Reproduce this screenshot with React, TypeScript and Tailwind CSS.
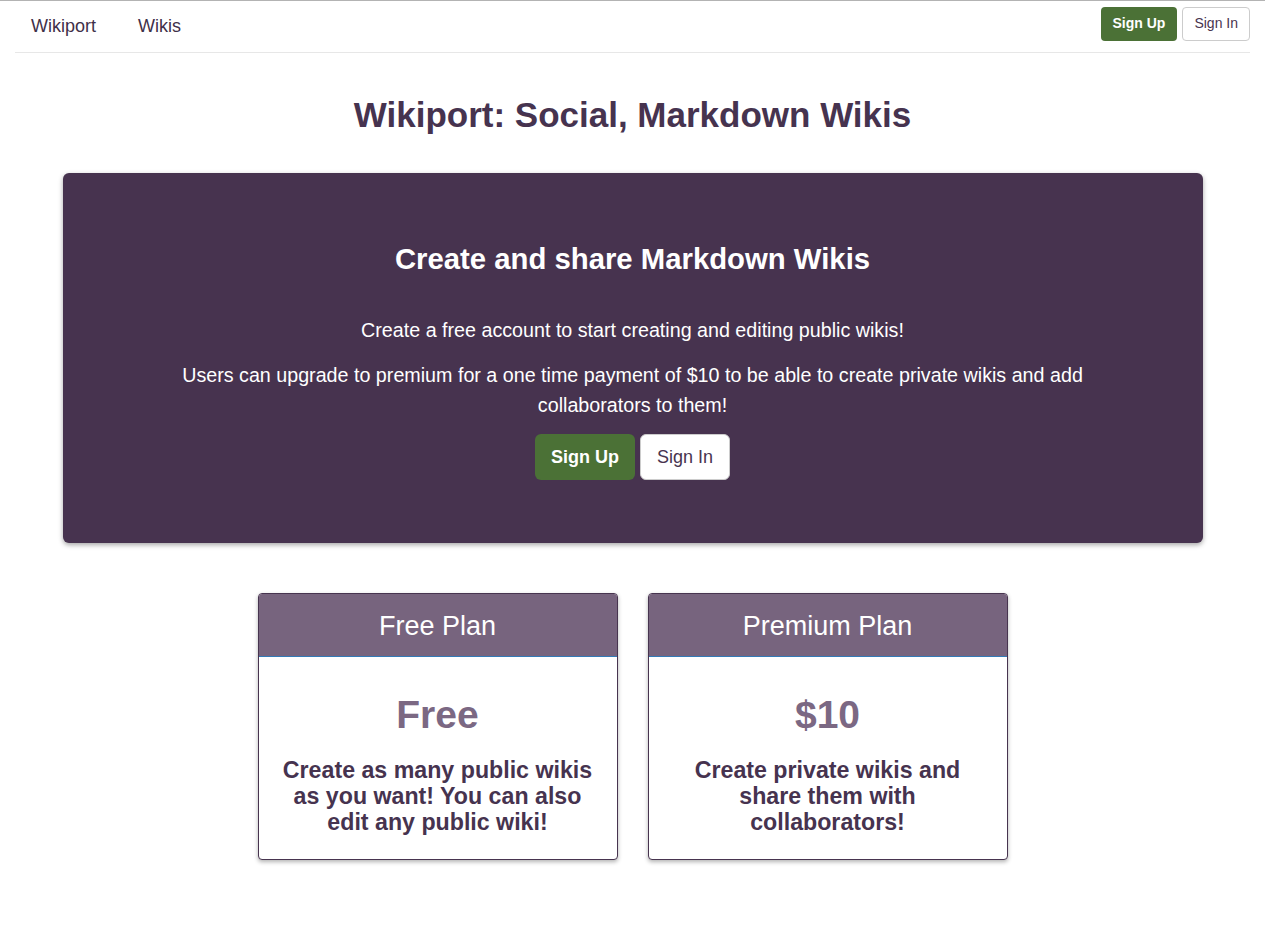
import React from "react";

// Pricing plans shown under the hero
const plans = [
    {
        name: "Free Plan",
        price: "Free",
        text: "Create as many public wikis as you want! You can also edit any public wiki!",
    },
    {
        name: "Premium Plan",
        price: "$10",
        text: "Create private wikis and share them with collaborators!",
    },
];

const App = () => {
    return (
        <div className="min-h-[927px] bg-white border-t border-[#b3b3b3] font-['Liberation_Sans',Arial,sans-serif] text-[#47344f]">
            {/* Navbar */}
            <div className="px-[15px]">
                <nav className="h-[52px] flex items-center justify-between border-b border-[#e7e7e7]">
                    <div className="flex items-center text-[18px] text-[#3f3049]">
                        <a className="pl-[16px] pr-[42px]">Wikiport</a>
                        <a>Wikis</a>
                    </div>
                    <div className="flex items-center gap-[5px] mb-[6px]">
                        <button className="h-[34px] px-[12px] rounded-[4px] bg-[#4b7136] text-white text-[14px] font-bold">
                            Sign Up
                        </button>
                        <button className="h-[34px] px-[11px] rounded-[4px] bg-white border border-[#cccccc] text-[14px] text-[#47344f]">
                            Sign In
                        </button>
                    </div>
                </nav>
            </div>

            <div className="w-[1140px] mx-auto">
                {/* Page title */}
                <h1 className="mt-[42px] text-center text-[35px] font-bold leading-[40px] text-[#46334f]">
                    Wikiport: Social, Markdown Wikis
                </h1>

                {/* Hero */}
                <section className="mt-[38px] bg-[#47334f] rounded-[6px] shadow-[0_2px_5px_rgba(0,0,0,0.35)] pt-[69px] pb-[63px] text-center text-white">
                    <h2 className="text-[29.3px] font-bold leading-[33px]">Create and share Markdown Wikis</h2>
                    <p className="mt-[40px] text-[19.7px] leading-[30px]">
                        Create a free account to start creating and editing public wikis!
                    </p>
                    <p className="mt-[15px] mx-auto w-[940px] text-[19.7px] leading-[30px]">
                        Users can upgrade to premium for a one time payment of $10 to be able to create private wikis and add collaborators to them!
                    </p>
                    <div className="mt-[14px] flex justify-center gap-[5px]">
                        <button className="h-[46px] px-[16px] rounded-[6px] bg-[#4b7136] text-white text-[18px] font-bold">
                            Sign Up
                        </button>
                        <button className="h-[46px] px-[16px] rounded-[6px] bg-white border border-[#cccccc] text-[18px] text-[#47344f]">
                            Sign In
                        </button>
                    </div>
                </section>

                {/* Plans */}
                <div className="mt-[50px] flex justify-center gap-[30px]">
                    {plans.map((plan) => (
                        <div
                            key={plan.name}
                            className="w-[360px] h-[267px] border border-[#47344f] rounded-[4px] overflow-hidden shadow-[0_2px_4px_rgba(0,0,0,0.3)] bg-white text-center"
                        >
                            <div className="h-[63px] pt-[3px] bg-[#77647e] border-b border-[#337ab7] flex items-center justify-center text-white text-[27px] font-light">
                                {plan.name}
                            </div>
                            <div className="pt-[36px] px-[10px]">
                                <div className="text-[39px] leading-[44px] font-bold text-[#7b6883]">{plan.price}</div>
                                <p className="mt-[20px] mx-auto w-[330px] text-[23.2px] leading-[26px] font-bold text-[#46334f]">
                                    {plan.text}
                                </p>
                            </div>
                        </div>
                    ))}
                </div>
            </div>
        </div>
    );
};

export default App;
